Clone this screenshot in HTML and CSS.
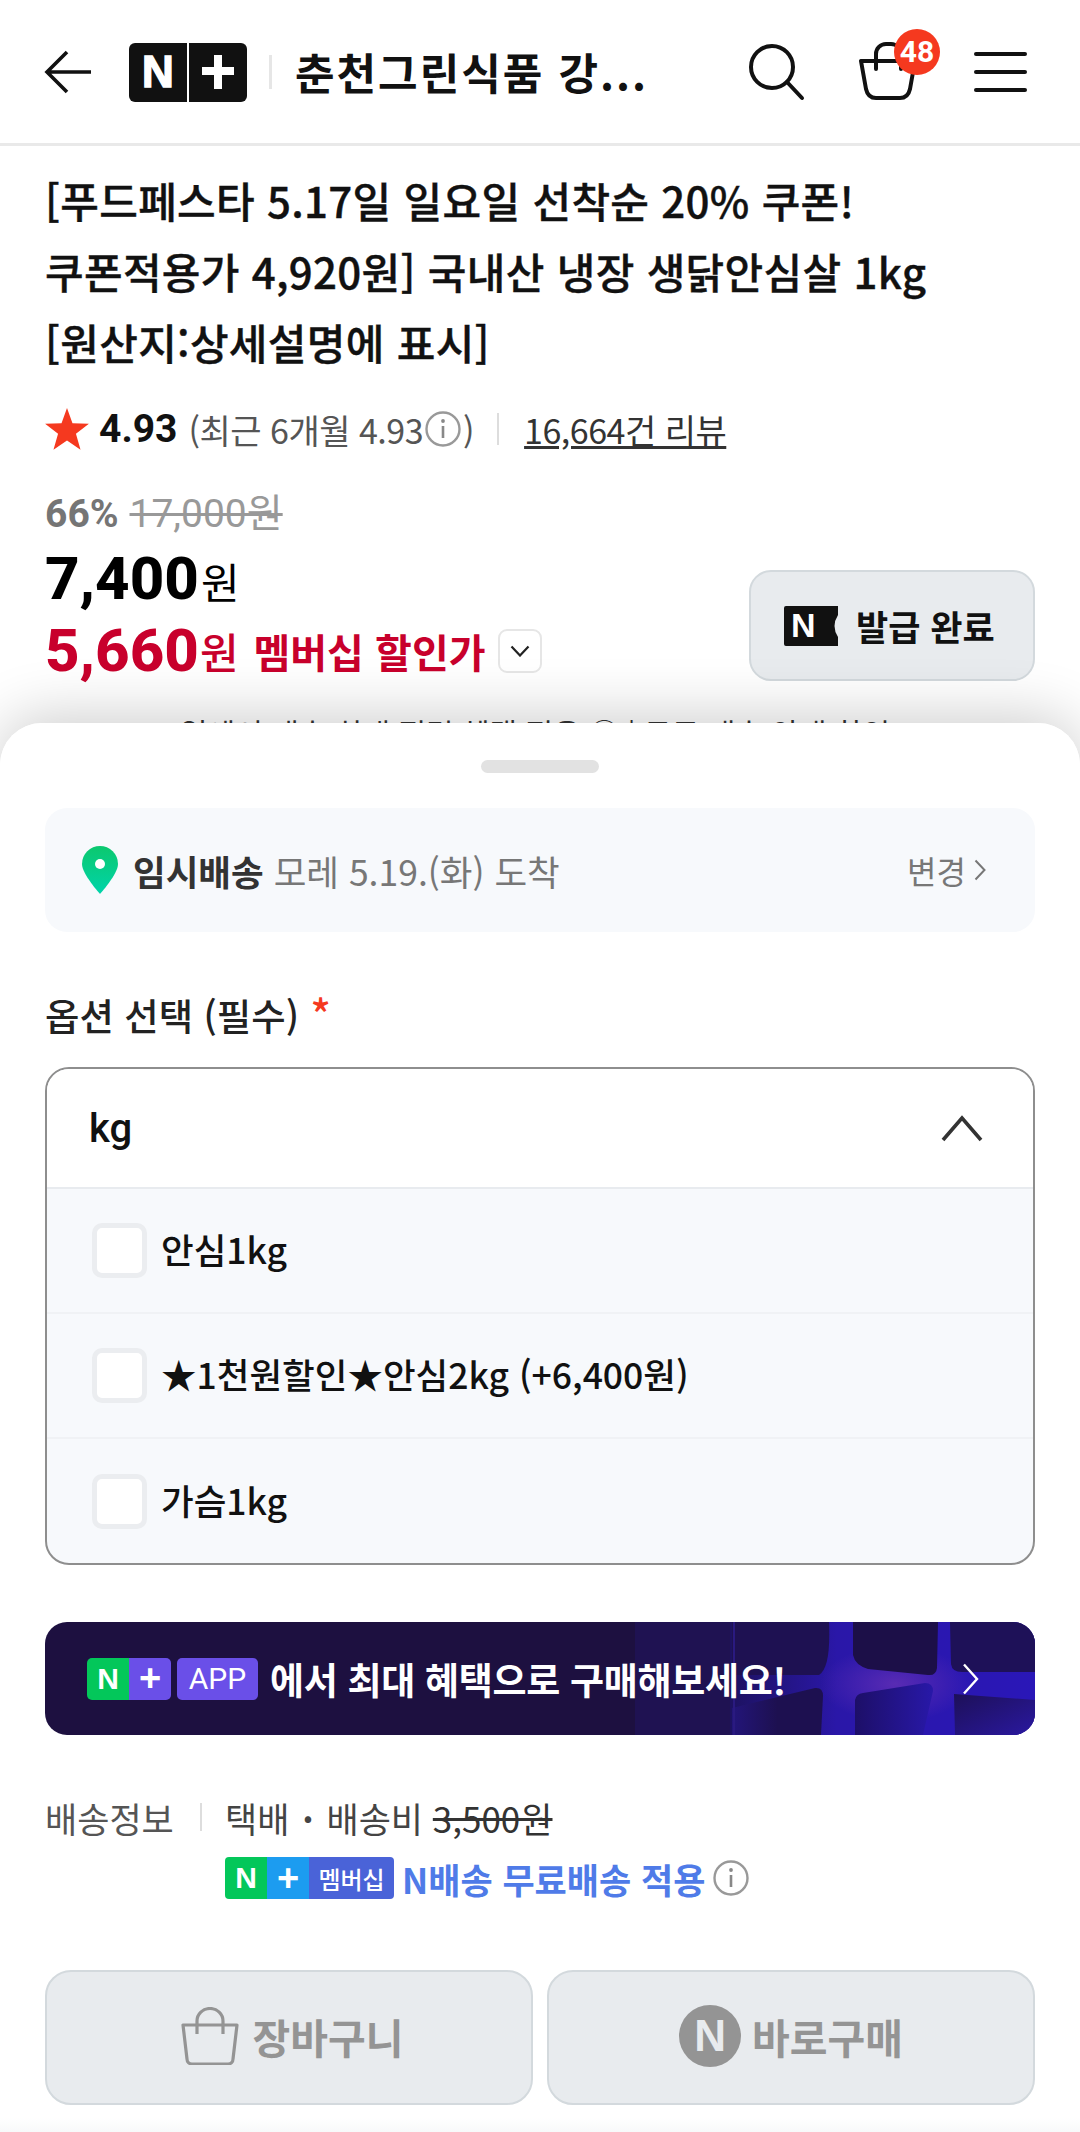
FILE: index.html
```html
<!DOCTYPE html>
<html lang="ko">
<head>
<meta charset="utf-8">
<title>춘천그린식품</title>
<link rel="stylesheet" href="styles.css">
</head>
<body>
<div class="page">
  <header class="top">
    <svg class="back" width="48" height="44" viewBox="0 0 48 44"><path d="M23 2 3 22l20 20M3 22h44" fill="none" stroke="#111" stroke-width="3.6"/></svg>
    <div class="logo"><span class="logo-n">N</span><span class="logo-p"><svg width="32" height="34" viewBox="0 0 32 34"><path d="M12 0h8v12h12v8H20v14h-8V20H0v-8h12z" fill="#fff"/></svg></span></div>
    <span class="top-sep"></span>
    <h1 class="store">춘천그린식품 강...</h1>
    <svg class="search" width="58" height="58" viewBox="0 0 58 58"><circle cx="23" cy="24" r="21" fill="none" stroke="#111" stroke-width="4"/><path d="m38 39 15 16" stroke="#111" stroke-width="4" stroke-linecap="round" fill="none"/></svg>
    <div class="cart">
      <svg width="58" height="60" viewBox="0 0 58 60"><path d="M2 19h54l-5 28q-2 9-10 9H17q-8 0-10-9z" fill="none" stroke="#111" stroke-width="4" stroke-linejoin="round"/><path d="M17 27V12a10 10 0 0 1 10-10h5a10 10 0 0 1 10 10v15" fill="none" stroke="#111" stroke-width="4" stroke-linecap="round"/></svg>
      <span class="badge">48</span>
    </div>
    <div class="menu"><i></i><i></i><i></i></div>
  </header>

  <section class="product">
    <h2 class="name">[푸드페스타 5.17일 일요일 선착순 20% 쿠폰!<br>쿠폰적용가 4,920원] 국내산 냉장 생닭안심살 1kg<br>[원산지:상세설명에 표시]</h2>
    <div class="rating">
      <svg class="star" width="44" height="42" viewBox="0 0 24 23"><path d="m12 0 3 8.3 9 .3-7.1 5.5 2.5 8.7L12 17.8l-7.4 5 2.5-8.7L0 8.6l9-.3z" fill="#f5391f"/></svg>
      <b class="score">4.93</b>
      <span class="recent">(최근 6개월 4.93<svg class="info" width="36" height="36" viewBox="0 0 36 36"><circle cx="18" cy="18" r="16.5" fill="none" stroke="#999" stroke-width="2.4"/><path d="M18 15v12" stroke="#888" stroke-width="2.6"/><circle cx="18" cy="10" r="1.9" fill="#888"/></svg>)</span>
      <span class="rate-sep"></span>
      <span class="reviews">16,664건 리뷰</span>
    </div>
    <div class="price-wrap">
      <div class="prices">
        <div class="was"><b>66%</b> <s>17,000원</s></div>
        <div class="now"><b>7,400</b><span>원</span></div>
        <div class="member"><b>5,660</b><span class="won">원</span><span class="mem-label">멤버십 할인가</span><span class="chev-box"><svg width="20" height="12" viewBox="0 0 20 12"><path d="m1.500 1.500 8.500 9 8.500-9" fill="none" stroke="#222" stroke-width="2.200"/></svg></span></div>
      </div>
      <button class="coupon">
        <svg width="54" height="40" viewBox="0 0 54 40"><path d="M0 2a2 2 0 0 1 2-2h52v9q-7 11 0 22v9H2a2 2 0 0 1-2-2z" fill="#111"/></svg>
        <span class="coupon-n">N</span>
        <span>발급 완료</span>
      </button>
    </div>
    <p class="behind">일에서 배송 최대 적립 혜택 적용 ⓘ | 무료 배송 안내 할인</p>
  </section>

  <section class="sheet">
    <div class="handle"></div>
    <div class="ship-box">
      <svg width="36" height="48" viewBox="0 0 36 48"><defs><linearGradient id="pin" x1="0" y1="0" x2="0" y2="1"><stop offset="0" stop-color="#0cc86e"/><stop offset="1" stop-color="#00d4aa"/></linearGradient></defs><path d="M18 0a18 18 0 0 1 18 18c0 10-18 30-18 30S0 28 0 18A18 18 0 0 1 18 0z" fill="url(#pin)"/><circle cx="18" cy="18" r="5" fill="#fff"/></svg>
      <b class="ship-type">임시배송</b>
      <span class="ship-date">모레 5.19.(화) 도착</span>
      <span class="ship-change">변경<svg width="12" height="22" viewBox="0 0 12 22"><path d="m1.500 1.500 9 9.500-9 9.500" fill="none" stroke="#777" stroke-width="2"/></svg></span>
    </div>
    <div class="opt-label">옵션 선택 (필수) <span class="req">*</span></div>
    <div class="select">
      <div class="sel-head"><b>kg</b><svg width="42" height="28" viewBox="0 0 42 28"><path d="M2 26 21 4l19 22" fill="none" stroke="#333" stroke-width="3.600"/></svg></div>
      <div class="opt"><span class="box"></span><span class="opt-text">안심1kg</span></div>
      <div class="opt"><span class="box"></span><span class="opt-text">★1천원할인★안심2kg (+6,400원)</span></div>
      <div class="opt"><span class="box"></span><span class="opt-text">가슴1kg</span></div>
    </div>
    <div class="banner">
      <svg class="banner-art" width="990" height="113" viewBox="0 0 990 113">
        <defs>
          <linearGradient id="band" x1="0" y1="0" x2="1" y2="0"><stop offset="0" stop-color="#1d1260"/><stop offset=".35" stop-color="#2a17a8"/><stop offset="1" stop-color="#2a17b8"/></linearGradient>
          <linearGradient id="paneE" x1="0" y1="0" x2="1" y2="0"><stop offset="0" stop-color="#1d0f68"/><stop offset="1" stop-color="#2818a8"/></linearGradient>
          <linearGradient id="paneD" x1="0" y1="0" x2="1" y2="0"><stop offset="0" stop-color="#23157a"/><stop offset=".5" stop-color="#1d1050"/></linearGradient>
          <linearGradient id="paneF" x1="0" y1="0" x2="1" y2="1"><stop offset="0" stop-color="#1d1058"/><stop offset="1" stop-color="#2a18a0"/></linearGradient>
          <radialGradient id="glow"><stop offset="0" stop-color="#5b2cb4" stop-opacity=".95"/><stop offset="1" stop-color="#5b2cb4" stop-opacity="0"/></radialGradient>
        </defs>
        <rect x="590" width="95" height="113" fill="#1f1252"/>
        <rect x="685" width="305" height="113" fill="url(#band)"/>
        <ellipse cx="850" cy="62" rx="75" ry="38" fill="url(#glow)"/>
        <path d="M687 0h97q2 46-10 53H687z" fill="#1e1152"/>
        <path d="M808 0h85l-1 46q-1 8-9 7l-60-6q-13-4-15-14z" fill="#1c0f48"/>
        <path d="M905 0h85v50h-73q-10 0-11-8z" fill="#1e1158"/>
        <path d="M687 86l83-20q8-1 8 8l-2 39H687z" fill="url(#paneD)"/>
        <path d="M810 78q1-6 8-7l62-10q8 0 8 8l-10 44h-68z" fill="url(#paneE)"/>
        <path d="M909 72l81 6v35h-80z" fill="url(#paneF)"/>
        <rect x="688" width="2" height="113" fill="#2a1a80"/>
      </svg>
      <span class="b-logo"><span class="b-n">N</span><span class="b-p">+</span></span>
      <span class="b-app">APP</span>
      <span class="b-text">에서 최대 혜택으로 구매해보세요!</span>
      <svg class="b-chev" width="18" height="32" viewBox="0 0 18 32"><path d="m2 1.500 13 14.500-13 14.500" fill="none" stroke="#fff" stroke-width="2.400"/></svg>
    </div>
    <div class="deliv">
      <span class="d-label">배송정보</span><span class="d-sep"></span>
      <span>택배 <span class="dot">·</span> 배송비 <s>3,500원</s></span>
    </div>
    <div class="deliv2">
      <span class="m-logo"><span class="m-n">N</span><span class="m-p">+</span><span class="m-t">멤버십</span></span>
      <b>N배송 무료배송 적용</b>
      <svg width="36" height="36" viewBox="0 0 36 36"><circle cx="18" cy="18" r="16.500" fill="none" stroke="#999" stroke-width="2.400"/><path d="M18 15v12" stroke="#888" stroke-width="2.600"/><circle cx="18" cy="10" r="1.900" fill="#888"/></svg>
    </div>
    <div class="actions">
      <button class="act act-cart">
        <svg width="58" height="58" viewBox="0 0 58 58"><path d="M2 18h54l-4 34a5 5 0 0 1-5 5H11a5 5 0 0 1-5-5z" fill="none" stroke="#949494" stroke-width="3.200" stroke-linejoin="round"/><path d="M16 27V14a13 12.500 0 0 1 26 0v13" fill="none" stroke="#949494" stroke-width="3.200"/></svg>
        <span>장바구니</span>
      </button>
      <button class="act act-buy">
        <span class="n-circle">N</span>
        <span>바로구매</span>
      </button>
    </div>
  </section>
</div>
</body>
</html>
```

FILE: styles.css
```css
* { box-sizing: border-box; }
html, body { margin: 0; padding: 0; background: #fff; }
body { font-family: "Noto Sans CJK KR", "Noto Sans", Roboto, sans-serif; color: #111; }
.page { position: relative; width: 1080px; height: 2132px; overflow: hidden; background: #fff; }

/* header */
.top { height: 146px; display: flex; align-items: center; padding: 0 0 0 44px; border-bottom: 3px solid #e9e9e9; }
.back { flex: none; margin-right: 37px; }
.logo { display: flex; flex: none; width: 118px; height: 59px; gap: 2px; margin-top: 1px; border-radius: 6px; overflow: hidden; }
.logo-n, .logo-p { flex: 1; background: #111; color: #fff; display: flex; align-items: center; justify-content: center; font-family: "Liberation Sans", sans-serif; font-weight: 700; line-height: 1; }
.logo-n { font-size: 44px; -webkit-text-stroke: 1.500px #fff; }
.top-sep { width: 3px; height: 34px; background: #e6e6e6; margin: 0 23px 0 22px; flex: none; }
.store { margin: 0; font-size: 43px; font-weight: 700; letter-spacing: 2px; width: 360px; white-space: nowrap; line-height: 1; flex: none; }
.search { flex: none; margin-left: 94px; }
.cart { position: relative; flex: none; margin-left: 52px; height: 60px; }
.cart svg { display: block; }
.badge { position: absolute; left: 35px; top: -13px; width: 46px; height: 46px; background: #f5391f; border-radius: 50%; color: #fff; font: 700 30px/46px Roboto, sans-serif; text-align: center; }
.menu { flex: none; margin-left: 57px; width: 53px; display: flex; flex-direction: column; gap: 14px; }
.menu i { display: block; height: 4px; background: #111; border-radius: 2px; }

/* product */
.product { padding: 18px 45px 0; }
.name { margin: 0; font-size: 42px; font-weight: 500; line-height: 71px; letter-spacing: 0.300px; white-space: nowrap; -webkit-text-stroke: 0.400px #111; }
.rating { display: flex; align-items: center; height: 60px; margin-top: 22px; font-size: 34px; }
.star { flex: none; }
.score { font-size: 39px; margin-left: 10px; font-family: Roboto, sans-serif; font-weight: 700; }
.recent { margin-left: 11px; color: #555; display: flex; align-items: center; letter-spacing: -0.500px; }
.info { margin: 0 2px; }
.rate-sep { width: 2px; height: 32px; background: #ddd; margin: 0 25px 0 23px; }
.reviews { text-decoration: underline; color: #333; letter-spacing: -0.500px; }
.price-wrap { display: flex; justify-content: space-between; align-items: flex-end; margin-top: 24px; }
.was { height: 54px; font-size: 39px; line-height: 54px; color: #999; white-space: nowrap; }
.was b { color: #757575; font-family: Roboto, sans-serif; }
.was s { font-family: Roboto, "Noto Sans CJK KR", sans-serif; }
.now { display: flex; align-items: baseline; height: 72px; margin-top: 6px; line-height: 72px; font-family: Roboto, "Noto Sans CJK KR", sans-serif; color: #000; }
.now b { font-size: 60px; font-weight: 800; }
.now span { font-size: 42px; margin-left: 2px; line-height: 72px; font-family: "Noto Sans CJK KR", sans-serif; }
.member { display: flex; align-items: center; height: 70px; margin-top: 1px; color: #c8002c; line-height: 70px; white-space: nowrap; }
.member b { font-size: 60px; font-weight: 800; font-family: Roboto, sans-serif; }
.won { font-size: 42px; margin-left: 1px; font-weight: 500; }
.mem-label { font-size: 40px; font-weight: 700; margin-left: 15px; }
.chev-box { width: 44px; height: 44px; border: 2px solid #e6e6e6; border-radius: 9px; margin-left: 12px; display: flex; align-items: center; justify-content: center; }
.coupon { position: relative; width: 286px; height: 111px; margin-bottom: 5px; background: #e8ebee; border: 2px solid #d3d9dd; border-radius: 22px; display: flex; align-items: center; gap: 18px; padding: 0 0 0 33px; font: 700 35px "Noto Sans CJK KR", sans-serif; color: #111; }
.coupon-n { position: absolute; left: 40px; top: 29px; color: #fff; font: 700 34px/48px "Liberation Sans", sans-serif; }
.behind { margin: 24px 0 0; padding-left: 135px; font-size: 30px; color: #333; white-space: nowrap; }

/* sheet */
.sheet { position: absolute; left: 0; right: 0; top: 723px; bottom: 0; background: linear-gradient(#fff calc(100% - 14px), #f8f9fa 100%); border-radius: 42px 42px 0 0; box-shadow: 0 -6px 60px rgba(0,0,0,.2); padding: 37px 45px 0; }
.handle { width: 118px; height: 13px; margin: 0 auto; background: #e2e2e2; border-radius: 7px; }
.ship-box { height: 124px; margin-top: 35px; background: #f7f9fc; border-radius: 22px; display: flex; align-items: center; padding: 0 49px 0 37px; font-size: 35.500px; }
.ship-type { margin-left: 15px; color: #333; }
.ship-date { margin-left: 10px; color: #777; }
.ship-change { margin-left: auto; display: flex; align-items: center; gap: 8px; color: #777; font-size: 32px; }
.opt-label { margin-top: 56px; font-size: 37.400px; font-weight: 500; line-height: 54px; color: #222; }
.req { color: #f5391f; font-size: 42px; font-weight: 500; line-height: 40px; margin-left: 1px; }
.select { margin-top: 25px; height: 498px; border: 2px solid #8e8e8e; border-radius: 24px; overflow: hidden; background: #f7f9fc; }
.sel-head { height: 120px; background: #fff; border-bottom: 2px solid #e8ebef; display: flex; align-items: center; justify-content: space-between; padding: 0 50px 0 42px; font-size: 40px; }
.sel-head b { font-weight: 500; font-family: Roboto, sans-serif; }
.opt { height: 125px; display: flex; align-items: center; padding-left: 45px; gap: 14px; font-size: 35.500px; font-weight: 500; border-bottom: 2px solid #f0f2f5; color: #111; }
.opt:last-child { border-bottom: 0; }
.opt-text { position: relative; top: -2px; }
.box { width: 55px; height: 55px; border: 5px solid #ebedf0; border-radius: 10px; background: #fff; flex: none; }
.banner { position: relative; overflow: hidden; height: 113px; margin-top: 57px; background: #1d1040; border-radius: 22px; display: flex; align-items: center; padding-left: 42px; color: #fff; }
.banner-art { position: absolute; left: 0; top: 0; }
.b-logo, .b-app, .b-text { position: relative; }
.b-logo { display: flex; width: 84px; height: 42px; border-radius: 5px; overflow: hidden; }
.b-n, .b-p { flex: 1; display: flex; align-items: center; justify-content: center; font: 700 30px "Liberation Sans", sans-serif; }
.b-n { background: #03c75a; }
.b-p { background: #6a4fe8; font-size: 38px; }
.b-app { width: 81px; height: 42px; margin-left: 6px; background: #6a4fe8; border-radius: 5px; font: 400 30px/42px Roboto, sans-serif; text-align: center; }
.b-text { margin-left: 12px; font-size: 37px; font-weight: 700; letter-spacing: -0.300px; white-space: nowrap; }
.b-chev { position: absolute; left: 917px; top: 41px; }
.deliv { display: flex; align-items: center; height: 50px; margin-top: 57px; font-size: 35px; color: #444; }
.d-label { width: 130px; color: #555; white-space: nowrap; }
.d-sep { width: 2px; height: 28px; background: #ddd; margin: 0 23px 0 25px; }
.dot { font-weight: 700; margin: 0 3px; }
.deliv s { color: #333; }
.deliv2 { display: flex; align-items: center; height: 44px; margin-top: 14px; padding-left: 180px; color: #4f7be8; font-size: 35px; }
.deliv2 b { margin: 0 8px; white-space: nowrap; }
.m-logo { display: flex; width: 169px; height: 42px; border-radius: 4px; overflow: hidden; flex: none; color: #fff; }
.m-n, .m-p, .m-t { display: flex; align-items: center; justify-content: center; }
.m-n { width: 42px; background: #03c75a; font: 700 30px "Liberation Sans", sans-serif; }
.m-p { width: 42px; background: #1c9cf0; font: 700 38px "Liberation Sans", sans-serif; }
.m-t { flex: 1; background: #4a63d8; font-size: 24px; font-weight: 500; }
.actions { display: grid; grid-template-columns: 1fr 1fr; gap: 14px; margin-top: 70px; }
.act { height: 135px; background: #e8ebee; border: 2px solid #d3d9dd; border-radius: 26px; display: flex; align-items: center; justify-content: center; gap: 14px; padding: 0 0 4px; color: #949494; font: 700 41px "Noto Sans CJK KR", sans-serif; }
.act-cart { padding-left: 6px; }
.act-buy { gap: 11px; }
.n-circle { width: 62px; height: 62px; border-radius: 50%; background: #949494; color: #e8ebee; font: 700 44px/62px "Liberation Sans", sans-serif; text-align: center; }
```
